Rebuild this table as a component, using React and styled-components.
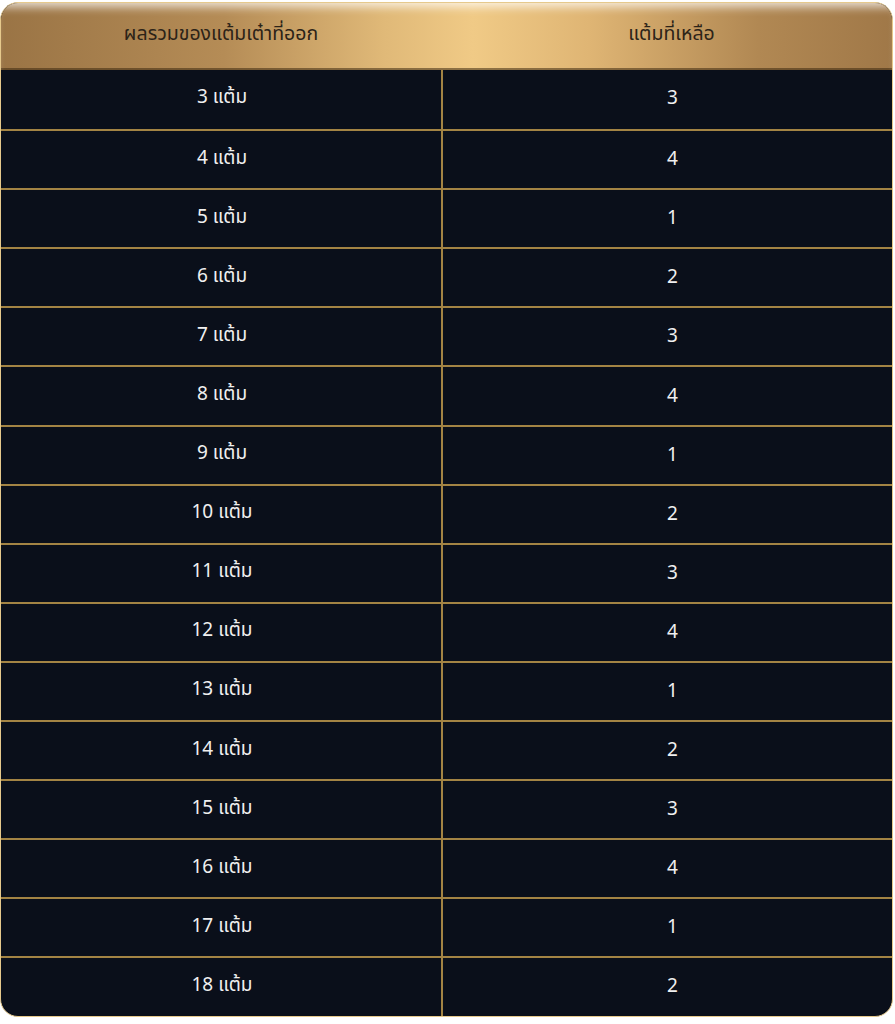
import React from "react"
import styled, { createGlobalStyle } from "styled-components"

const GlobalStyle = createGlobalStyle`
  html, body {
    margin: 0;
    padding: 0;
    background: #ffffff;
  }
  body {
    font-family: "Noto Sans", "Noto Sans Thai", "DejaVu Sans", sans-serif;
  }
`

const Page = styled.div`
  width: 895px;
  padding: 2px 2px 8px 0;
  box-sizing: border-box;
`

const Table = styled.div`
  width: 893px;
  border: 1.5px solid #e6c98c;
  border-radius: 18px;
  overflow: hidden;
  background: #0a0f1a;
  box-sizing: border-box;
`

const HeaderRow = styled.div`
  display: grid;
  grid-template-columns: 440px 1fr;
  height: 67px;
  align-items: center;
  background: linear-gradient(
    90deg,
    #9a7445 0%,
    #b58c56 25%,
    #e0b978 43%,
    #f0ca86 53%,
    #dfb574 66%,
    #b18853 85%,
    #a07848 100%
  );
  box-shadow: inset 0 10px 10px -6px rgba(255, 255, 255, 0.75),
    inset 0 -2px 0 rgba(60, 40, 15, 0.55);
`

const HeaderCell = styled.div`
  text-align: center;
  font-size: 19.5px;
  color: #2c2318;
  padding-bottom: 6px;
  padding-left: ${p => (p.right ? "10px" : "0")};
`

const Row = styled.div`
  display: grid;
  grid-template-columns: 440px 2px 1fr;
  height: 59.1px;
  box-sizing: border-box;
  border-top: ${p => (p.first ? "none" : "2px solid #a38444")};
`

const Cell = styled.div`
  display: flex;
  align-items: center;
  justify-content: center;
  color: #f0f0f0;
  font-size: 19px;
  padding-bottom: ${p => (p.first ? "5px" : "3px")};
  padding-left: ${p => (p.right ? "10px" : "2px")};
`

const Divider = styled.div`
  background: #a38444;
`

const rows = [
  [3, 3], [4, 4], [5, 1], [6, 2], [7, 3], [8, 4], [9, 1], [10, 2],
  [11, 3], [12, 4], [13, 1], [14, 2], [15, 3], [16, 4], [17, 1], [18, 2],
]

const App = () => (
  <Page>
    <GlobalStyle />
    <Table>
      <HeaderRow>
        <HeaderCell>ผลรวมของแต้มเต๋าที่ออก</HeaderCell>
        <HeaderCell right>แต้มที่เหลือ</HeaderCell>
      </HeaderRow>
      {rows.map(([sum, left], i) => (
        <Row key={sum} first={i === 0}>
          <Cell first={i === 0}>{sum} แต้ม</Cell>
          <Divider />
          <Cell first={i === 0} right>{left}</Cell>
        </Row>
      ))}
    </Table>
  </Page>
)

export default App
